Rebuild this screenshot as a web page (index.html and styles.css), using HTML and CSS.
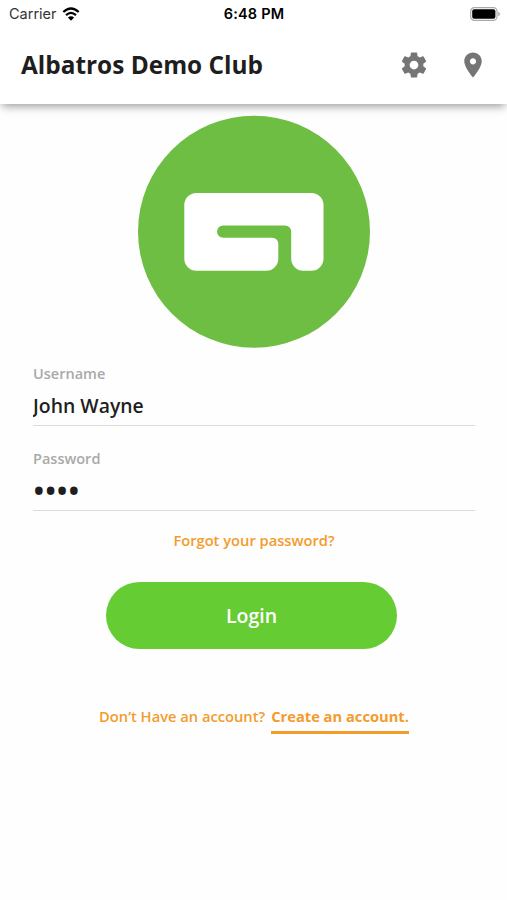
FILE: index.html
```html
<!DOCTYPE html>
<html lang="en">
<head>
    <meta charset="UTF-8">
    <meta name="viewport" content="width=device-width, initial-scale=1.0">
    <title>Albatros Demo Club</title>
    <link rel="stylesheet" href="styles.css">
</head>
<body>
<header class="header">
    <div class="status-bar">
        <div class="carrier">
            <span>Carrier</span>
            <svg class="wifi" viewBox="0 0 18 14">
                <path d="M1.3 5 Q9 -2 16.7 5" fill="none" stroke="#000" stroke-width="2.3"/>
                <path d="M4 8.1 Q9 3.7 14 8.1" fill="none" stroke="#000" stroke-width="2.2"/>
                <path d="M9 13.7 L5.9 10.5 Q9 7.9 12.1 10.5 Z"/>
            </svg>
        </div>
        <span class="time">6:48 PM</span>
        <svg class="battery" viewBox="0 0 30 14">
            <rect x="0.7" y="0.7" width="26.3" height="12.6" rx="3.6" fill="#fff" stroke="#aaa" stroke-width="1.2"/>
            <rect x="2.2" y="2.2" width="23.2" height="9.6" rx="2" fill="#000"/>
            <path d="M28.2 4.8 Q30 5.6 30 7 Q30 8.4 28.2 9.2 Z" fill="#aaa"/>
        </svg>
    </div>
    <div class="title-bar">
        <h1>Albatros Demo Club</h1>
        <div class="actions">
            <svg class="icon" viewBox="0 0 24 24">
                <path d="M19.43 12.98c.04-.32.07-.64.07-.98s-.03-.66-.07-.98l2.11-1.65c.19-.15.24-.42.12-.64l-2-3.46c-.12-.22-.39-.3-.61-.22l-2.49 1c-.52-.4-1.08-.73-1.69-.98l-.38-2.65C14.46 2.18 14.25 2 14 2h-4c-.25 0-.46.18-.49.42l-.38 2.65c-.61.25-1.17.59-1.69.98l-2.49-1c-.23-.09-.49 0-.61.22l-2 3.46c-.13.22-.07.49.12.64l2.11 1.65c-.04.32-.07.65-.07.98s.03.66.07.98l-2.11 1.65c-.19.15-.24.42-.12.64l2 3.46c.12.22.39.3.61.22l2.49-1c.52.4 1.08.73 1.69.98l.38 2.65c.03.24.24.42.49.42h4c.25 0 .46-.18.49-.42l.38-2.65c.61-.25 1.17-.59 1.69-.98l2.49 1c.23.09.49 0 .61-.22l2-3.46c.12-.22.07-.49-.12-.64l-2.11-1.65zM12 15.5c-1.93 0-3.5-1.57-3.5-3.5s1.57-3.5 3.5-3.5 3.5 1.57 3.5 3.5-1.57 3.5-3.5 3.5z"/>
            </svg>
            <svg class="icon" viewBox="0 0 24 24">
                <path d="M12 2C8.13 2 5 5.13 5 9c0 5.25 7 13 7 13s7-7.75 7-13c0-3.87-3.13-7-7-7zm0 9.5c-1.38 0-2.5-1.12-2.5-2.5s1.12-2.5 2.5-2.5 2.5 1.12 2.5 2.5-1.12 2.5-2.5 2.5z"/>
            </svg>
        </div>
    </div>
</header>

<main class="login">
    <svg class="logo" viewBox="0 0 232 232">
        <circle cx="116" cy="115.7" r="116" fill="#6fbe44"/>
        <path fill="#fff" d="M58.3 77H173.5A12 12 0 0 1 185.5 89V142.8A12 12 0 0 1 173.5 154.8H165.2A12 12 0 0 1 153.2 142.8V115.4A6 6 0 0 0 147.2 109.4H85.2A6.2 6.2 0 0 0 85.2 121.8H134.3A6 6 0 0 1 140.3 127.8V142.8A12 12 0 0 1 128.3 154.8H58.3A12 12 0 0 1 46.3 142.8V89A12 12 0 0 1 58.3 77Z"/>
    </svg>

    <form class="login-form">
        <div class="form-group">
            <label for="username">Username</label>
            <input type="text" id="username" value="John Wayne">
        </div>
        <div class="form-group">
            <label for="password">Password</label>
            <input type="password" id="password" value="1234">
        </div>
        <a class="forgot" href="#">Forgot your password?</a>
        <button type="button">Login</button>
    </form>

    <div class="signup">
        <span>Don’t Have an account?</span>
        <a href="#">Create an account.</a>
    </div>
</main>
</body>
</html>
```

FILE: styles.css
```css
* {
    box-sizing: border-box;
}

body {
    margin: 0;
    height: 900px;
    overflow: hidden;
    background-color: #fefefe;
    font-family: 'Open Sans', sans-serif;
    color: #1e1e1e;
}

.header {
    height: 103.5px;
    background-color: #fff;
    box-shadow: 0 4px 9px -2px rgba(0, 0, 0, 0.42);
}

.status-bar {
    display: grid;
    grid-template-columns: 1fr auto 1fr;
    align-items: center;
    height: 27px;
    padding: 0 7px 0 9px;
    font-family: Inter, sans-serif;
    font-size: 14.5px;
    color: #000;
}

.carrier {
    display: flex;
    align-items: center;
    gap: 5px;
    color: #333;
}

.wifi {
    width: 18px;
    height: 14px;
}

.time {
    margin-right: 1px;
    font-weight: 600;
    letter-spacing: 0.2px;
}

.battery {
    width: 30px;
    height: 14px;
    justify-self: end;
}

.title-bar {
    display: flex;
    justify-content: space-between;
    align-items: center;
    height: 75px;
    padding: 0 19px 0 21px;
}

h1 {
    margin: 0 0 1px;
    font-size: 24.4px;
    font-weight: 700;
}

.actions {
    display: flex;
    gap: 29px;
}

.icon {
    width: 30px;
    height: 30px;
    fill: #757575;
}

.login {
    display: flex;
    flex-direction: column;
    align-items: center;
    padding: 12.5px 32px 0 33px;
}

.logo {
    width: 232px;
    height: 232px;
    overflow: visible;
}

.login-form {
    display: flex;
    flex-direction: column;
    align-items: center;
    width: 100%;
    padding-top: 14px;
}

.form-group {
    width: 100%;
    height: 85px;
}

label {
    display: block;
    height: 22px;
    line-height: 23px;
    font-size: 14.5px;
    font-weight: 600;
    color: #a9a9a9;
}

input {
    display: block;
    width: 100%;
    height: 42px;
    padding: 1px 0 0;
    border: none;
    border-bottom: 1px solid #dcdcdc;
    background: none;
    font-family: inherit;
    font-size: 19.4px;
    font-weight: 600;
    color: #1e1e1e;
    outline: none;
}

input[type="password"] {
    padding-top: 0;
    font-size: 31px;
}

.forgot {
    margin-top: -3px;
    line-height: 22px;
    font-size: 14.7px;
    font-weight: 600;
    color: #f49b2c;
    text-decoration: none;
}

button {
    width: 291px;
    height: 67px;
    margin: 31px 5px 0 0;
    border: none;
    border-radius: 34px;
    background-color: #66cc33;
    font-family: inherit;
    font-size: 19.5px;
    font-weight: 600;
    color: #fff;
    cursor: pointer;
}

.signup {
    display: flex;
    gap: 6px;
    margin-top: 56px;
    line-height: 22px;
    font-size: 14.7px;
    font-weight: 600;
    color: #f49b2c;
}

.signup a {
    padding-bottom: 4px;
    border-bottom: 3px solid #f49b2c;
    font-weight: 700;
    color: inherit;
    text-decoration: none;
}
```
